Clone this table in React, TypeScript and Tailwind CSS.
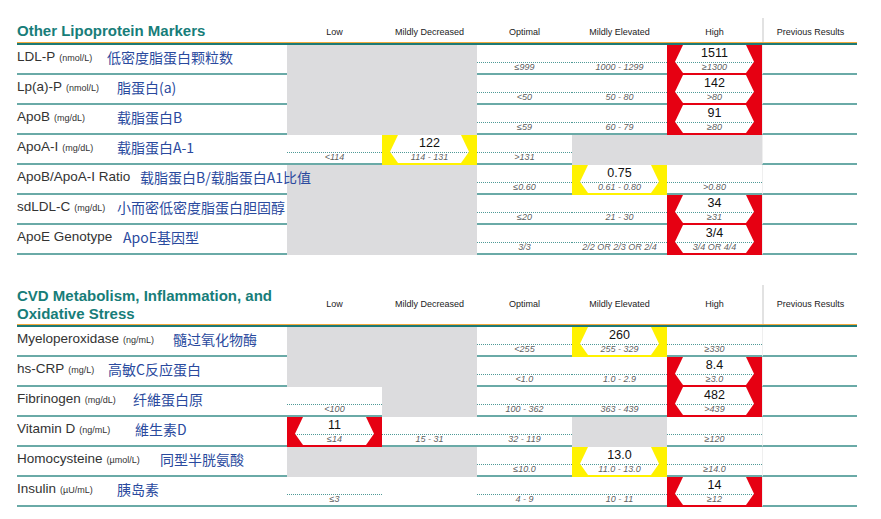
import React from "react";

type Cell =
  | { t: "grey" }
  | { t: "blank" }
  | { t: "r"; range: string }
  | { t: "hi"; c: "red" | "yellow"; v: string; range: string };

type Row = { en: string; unit?: string; cn: string; w: string; cells: Cell[] };

const grey: Cell = { t: "grey" };
const r = (range: string): Cell => ({ t: "r", range });
const red = (v: string, range: string): Cell => ({ t: "hi", c: "red", v, range });
const yel = (v: string, range: string): Cell => ({ t: "hi", c: "yellow", v, range });

const lipo: Row[] = [
  { en: "LDL-P", unit: "(nmol/L)", cn: "低密度脂蛋白颗粒数", w: "w-[90px]", cells: [grey, grey, r("≤999"), r("1000 - 1299"), red("1511", "≥1300")] },
  { en: "Lp(a)-P", unit: "(nmol/L)", cn: "脂蛋白(a)", w: "w-[100px]", cells: [grey, grey, r("<50"), r("50 - 80"), red("142", ">80")] },
  { en: "ApoB", unit: "(mg/dL)", cn: "载脂蛋白B", w: "w-[100px]", cells: [grey, grey, r("≤59"), r("60 - 79"), red("91", "≥80")] },
  { en: "ApoA-I", unit: "(mg/dL)", cn: "载脂蛋白A-1", w: "w-[100px]", cells: [r("<114"), yel("122", "114 - 131"), r(">131"), grey, grey] },
  { en: "ApoB/ApoA-I Ratio", cn: "载脂蛋白B/载脂蛋白A1比值", w: "w-[123px]", cells: [grey, grey, r("≤0.60"), yel("0.75", "0.61 - 0.80"), r(">0.80")] },
  { en: "sdLDL-C", unit: "(mg/dL)", cn: "小而密低密度脂蛋白胆固醇", w: "w-[100px]", cells: [grey, grey, r("≤20"), r("21 - 30"), red("34", "≥31")] },
  { en: "ApoE Genotype", cn: "ApoE基因型", w: "w-[106px]", cells: [grey, grey, r("3/3"), r("2/2 OR 2/3 OR 2/4"), red("3/4", "3/4 OR 4/4")] },
];

const cvd: Row[] = [
  { en: "Myeloperoxidase", unit: "(ng/mL)", cn: "髓过氧化物酶", w: "w-[156px]", cells: [grey, grey, r("<255"), yel("260", "255 - 329"), r("≥330")] },
  { en: "hs-CRP", unit: "(mg/L)", cn: "高敏C反应蛋白", w: "w-[91px]", cells: [grey, grey, r("<1.0"), r("1.0 - 2.9"), red("8.4", "≥3.0")] },
  { en: "Fibrinogen", unit: "(mg/dL)", cn: "纤維蛋白原", w: "w-[116px]", cells: [r("<100"), grey, r("100 - 362"), r("363 - 439"), red("482", ">439")] },
  { en: "Vitamin D", unit: "(ng/mL)", cn: "維生素D", w: "w-[118px]", cells: [red("11", "≤14"), r("15 - 31"), r("32 - 119"), grey, r("≥120")] },
  { en: "Homocysteine", unit: "(µmol/L)", cn: "同型半胱氨酸", w: "w-[143px]", cells: [grey, grey, r("≤10.0"), yel("13.0", "11.0 - 13.0"), r("≥14.0")] },
  { en: "Insulin", unit: "(µU/mL)", cn: "胰岛素", w: "w-[100px]", cells: [r("≤3"), { t: "blank" }, r("4 - 9"), r("10 - 11"), red("14", "≥12")] },
];

const cols = ["Low", "Mildly Decreased", "Optimal", "Mildly Elevated", "High"];

function RangeCell({ cell }: { cell: Cell }) {
  if (cell.t === "grey") return <div className="w-[95px] h-[30px] bg-[#dcdcde]" />;
  if (cell.t === "blank") return <div className="w-[95px] h-[30px] border-b-2 border-[#6aaaa7]" />;
  if (cell.t === "r")
    return (
      <div className="w-[95px] h-[30px] flex flex-col border-b-2 border-[#6aaaa7]">
        <div className="h-[17px]" />
        <div className="border-t border-dotted border-[#4f9a97]" />
        <div className="h-[10px] text-center text-[9px] leading-[9px] italic text-[#5f5f5f]">{cell.range}</div>
      </div>
    );
  return (
    <div className={cell.c === "red" ? "w-[95px] h-[30px] bg-[#e60012]" : "w-[95px] h-[30px] bg-[#fff200]"}>
      <div className="h-[28px] bg-white flex flex-col [clip-path:polygon(16px_0,79px_0,87px_60%,79px_100%,16px_100%,8px_60%)]">
        <div className="h-[17px] pt-[1px] text-center text-[12.5px] leading-[14px] text-[#111]">{cell.v}</div>
        <div className="border-t border-dotted border-[#4f9a97]" />
        <div className="h-[10px] text-center text-[9px] leading-[9px] italic text-[#5f5f5f]">{cell.range}</div>
      </div>
    </div>
  );
}

function TableRow({ row }: { row: Row }) {
  return (
    <div className="flex">
      <div className="w-[270px] h-[30px] border-b-2 border-[#6aaaa7] flex items-center pb-[3px]">
        <span className={`${row.w} shrink-0 whitespace-nowrap text-[13.5px] text-[#333]`}>
          {row.en}
          {row.unit && <span className="text-[9px] ml-[4px]">{row.unit}</span>}
        </span>
        <span className="relative z-10 whitespace-nowrap text-[14px] text-[#2a4a9e] font-['Noto_Sans_CJK_SC',sans-serif]">
          {row.cn}
        </span>
      </div>
      {row.cells.map((c, i) => (
        <RangeCell key={i} cell={c} />
      ))}
      <div className="w-[95px] h-[30px] border-b-2 border-[#6aaaa7] border-l border-l-[#efefef]" />
    </div>
  );
}

function Section({ title, rows, tall }: { title: React.ReactNode; rows: Row[]; tall?: boolean }) {
  return (
    <div>
      <div className={tall ? "flex h-[39px] items-center" : "flex h-[24px] items-center"}>
        <div className="w-[270px] pt-[1px] text-[15px] leading-[18px] font-bold text-[#177d79]">{title}</div>
        {cols.map((c) => (
          <div key={c} className={tall ? "w-[95px] text-center text-[9px] text-[#222]" : "w-[95px] pt-[5px] text-center text-[9px] text-[#222]"}>
            {c}
          </div>
        ))}
        <div
          className={
            tall
              ? "w-[95px] self-stretch flex items-center justify-center border-l-2 border-[#e2e2e2] text-[9px] text-[#222]"
              : "w-[95px] self-stretch flex items-center justify-center pt-[5px] border-l-2 border-[#e2e2e2] text-[9px] text-[#222]"
          }
        >
          Previous Results
        </div>
      </div>
      <div className="h-[1px] bg-[#f4a93c]" />
      <div className="h-[2px] bg-[#1c7a76]" />
      {rows.map((row) => (
        <TableRow key={row.en} row={row} />
      ))}
    </div>
  );
}

export default function App() {
  return (
    <div className="w-[881px] h-[519px] bg-white pl-[17px] pt-[18px] font-['Liberation_Sans','Noto_Sans_CJK_SC',sans-serif]">
      <div className="w-[840px]">
        <Section title="Other Lipoprotein Markers" rows={lipo} />
        <div className="h-[30px]" />
        <Section
          tall
          title={
            <>
              CVD Metabolism, Inflammation, and
              <br />
              Oxidative Stress
            </>
          }
          rows={cvd}
        />
      </div>
    </div>
  );
}
